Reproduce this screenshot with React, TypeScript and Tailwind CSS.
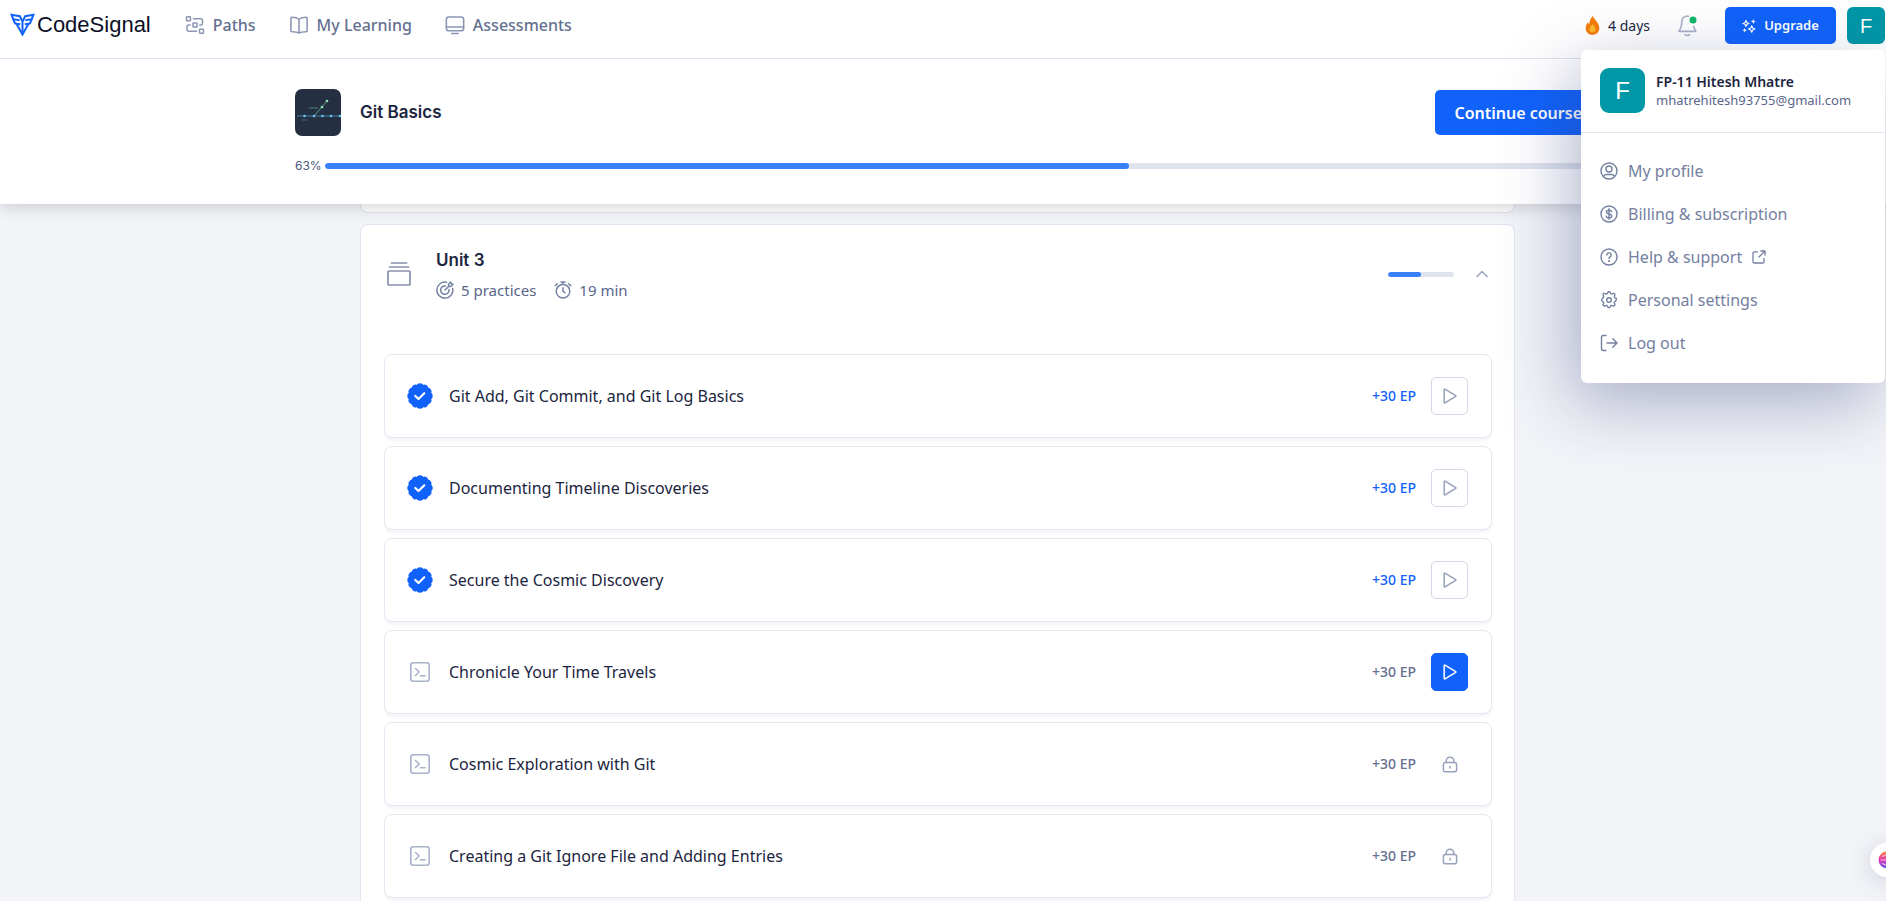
import type { ReactNode } from "react";

type IconProps = { className?: string; children?: ReactNode };

function Icon({ className = "", viewBox = "0 0 18 18", width = "1.4", children }: IconProps & { viewBox?: string; width?: string }) {
  return (
    <svg
      viewBox={viewBox}
      fill="none"
      stroke="currentColor"
      strokeWidth={width}
      strokeLinecap="round"
      strokeLinejoin="round"
      aria-hidden="true"
      className={`shrink-0 ${className}`}
    >
      {children}
    </svg>
  );
}

const LogoMark = () => (
  <svg viewBox="0 0 25 24" className="h-[24px] w-[25px] shrink-0" aria-hidden="true">
    <g fill="none" stroke="#1062fb" strokeWidth="2" strokeLinejoin="miter">
      <path d="M12.500 8.500 9.800 3.200 1.600 1.800 3.200 6.200 9.600 7.200" />
      <path d="M3.200 6.200 5 10.400 10.200 11.200M6.300 10.600 12.500 21.500 18.700 10.600" />
      <path d="M12.500 8.500 15.200 3.200 23.400 1.800 21.800 6.200 15.400 7.200" />
      <path d="M21.800 6.200 20 10.400 14.800 11.200M12.500 8.500V20" />
    </g>
  </svg>
);

const PathsIcon = () => (
  <Icon className="size-[20px] text-[#8b96b3]" viewBox="0 0 20 20" width="1.5">
    <rect x="1.500" y="1.800" width="4" height="4" rx=".6" />
    <rect x="8" y="8" width="4" height="4" rx=".6" />
    <rect x="14.500" y="14.200" width="4" height="4" rx=".6" />
    <path d="M8.500 3.800h7.500a1.500 1.500 0 0 1 1.500 1.500v3.200a1.500 1.500 0 0 1-1.500 1.500h-1.200M5.200 10H3.500A1.500 1.500 0 0 0 2 11.500v3.200a1.500 1.500 0 0 0 1.500 1.500H11.500" />
  </Icon>
);

const BookIcon = () => (
  <Icon className="size-[20px] text-[#8b96b3]" width="1.4">
    <path d="M9 3.800C7.600 2.600 5.500 2 2.500 2a.8.800 0 0 0-.8.800v11.400a.8.800 0 0 0 .8.800c3 0 5.100.2 6.500 1.400 1.400-1.200 3.500-1.400 6.500-1.400a.8.800 0 0 0 .8-.8V2.800a.8.800 0 0 0-.8-.8C12.500 2 10.400 2.600 9 3.800ZM9 3.800v12.600" />
  </Icon>
);

const MonitorIcon = () => (
  <Icon className="size-[20px] text-[#8b96b3]" width="1.4">
    <rect x="1.200" y="1.800" width="15.600" height="12.400" rx="2.300" />
    <path d="M1.200 10.800h15.600M6 16.700h6" />
  </Icon>
);

const FlameIcon = () => (
  <svg viewBox="0 0 15 19" className="h-[19px] w-[15px] shrink-0" aria-hidden="true">
    <path fill="#f57c0a" d="M7.900 0C8.400 3 14.300 6.300 14.300 12c0 4-3 6.800-6.800 6.800S.7 16 .7 12.400c0-2.600 1-4.600 2.300-6.200.2 1 .6 1.700 1.300 2.100C4.300 5 5.500 2 7.900 0Z" />
    <path fill="#fdb92e" d="M7.500 8c1.100 1.800 3.100 3 3.100 5.200a3.100 3.100 0 0 1-6.200 0C4.400 11 6.600 9.800 7.500 8Z" />
  </svg>
);

const BellIcon = () => (
  <svg viewBox="0 0 19 22" className="h-[22px] w-[19px] shrink-0" aria-hidden="true">
    <g fill="none" stroke="#a9b2c8" strokeWidth="1.6" strokeLinecap="round" strokeLinejoin="round">
      <path d="M10.500 1.200C6.400.6 3.700 3.300 3.700 6.800c0 4.200-.6 6.500-2.500 8.700-.3.400-.1.900.4.900h15.600c.5 0 .7-.5.400-.9-1-1.200-1.600-2.400-1.900-4" />
      <path d="M7 19.600c1.200 1.100 3.400 1.100 4.600 0" />
    </g>
    <circle cx="15" cy="5" r="3.500" fill="#12b76a" />
  </svg>
);

const SparkIcon = () => (
  <svg viewBox="0 0 14 14" className="size-[14px] shrink-0" aria-hidden="true">
    <path d="M4 1.500 5 3.700 7 4.500 5 5.300 4 7.500 3 5.300 1 4.500 3 3.700ZM9.700 6.800l1 2.200 2.200 1-2.200 1-1 2.200-1-2.200-2.200-1 2.200-1Z" fill="none" stroke="#fff" strokeWidth="1.200" strokeLinejoin="round" />
    <path d="M11.300 0l.7 1.800 1.700.7-1.700.7-.7 1.800-.7-1.800-1.700-.7 1.700-.7ZM2.700 9l.6 1.600 1.600.7-1.600.7-.6 1.600-.7-1.600-1.600-.7 1.600-.7Z" fill="#fff" />
  </svg>
);

const ProfileIcon = () => (
  <Icon className="size-[18px]">
    <circle cx="9" cy="9" r="8" />
    <circle cx="9" cy="7" r="3" />
    <path d="M3.500 14.200c.8-1.200 1.700-1.700 3-1.700h5c1.300 0 2.200.5 3 1.700" />
  </Icon>
);

const DollarIcon = () => (
  <Icon className="size-[18px]">
    <circle cx="9" cy="9" r="8" />
    <path d="M11.600 6.600C11.300 5.600 10.300 5.200 9 5.200c-1.500 0-2.600.6-2.600 1.900C6.400 9.800 11.700 8.200 11.700 11c0 1.300-1.200 1.900-2.700 1.900s-2.500-.6-2.800-1.700M9 3.800v10.400" />
  </Icon>
);

const HelpIcon = () => (
  <Icon className="size-[18px]">
    <circle cx="9" cy="9" r="8" />
    <path d="M6.800 7a2.200 2.200 0 1 1 3.400 1.900c-.8.500-1.200.8-1.200 1.600" />
    <circle cx="9" cy="13" r=".4" fill="currentColor" />
  </Icon>
);

const GearIcon = () => (
  <Icon className="size-[18px]">
    <path d="M7.700 1.800a1.350 1.350 0 0 1 2.600 0c.2 1.100 1.400 1.600 2.400.9a1.350 1.350 0 0 1 1.900 1.900c-.7 1-.2 2.200.9 2.400a1.350 1.350 0 0 1 0 2.600v.8c-1.100.2-1.600 1.400-.9 2.400a1.350 1.350 0 0 1-1.900 1.900c-1-.7-2.200-.2-2.400.9a1.350 1.350 0 0 1-2.600 0c-.2-1.100-1.400-1.600-2.400-.9a1.350 1.350 0 0 1-1.900-1.900c.7-1 .2-2.200-.9-2.400a1.350 1.350 0 0 1 0-2.600V7c1.100-.2 1.600-1.400.9-2.400a1.350 1.350 0 0 1 1.900-1.900c1 .7 2.200.2 2.400-.9Z" />
    <circle cx="9" cy="9" r="2.300" />
  </Icon>
);

const LogoutIcon = () => (
  <Icon className="size-[18px]">
    <path d="M6 1.500H3A1.500 1.500 0 0 0 1.500 3v12A1.500 1.500 0 0 0 3 16.500h3M7 9h10M12.800 4.800 17 9l-4.200 4.200" />
  </Icon>
);

const ExternalIcon = () => (
  <Icon className="size-[14px]" viewBox="0 0 14 14" width="1.3">
    <path d="M5.500 1.800H2.300a1.300 1.300 0 0 0-1.300 1.300v8.600A1.300 1.300 0 0 0 2.300 13h8.400a1.300 1.300 0 0 0 1.300-1.300V8.500M8.800 1H13v4.200M13 1 7 7" />
  </Icon>
);

const StackIcon = () => (
  <Icon className="size-[26px] text-[#8790ad]" viewBox="0 0 26 26" width="1.7">
    <path d="M5.500 2h15M3.500 6h19" />
    <rect x="2" y="10" width="22" height="14" rx=".8" />
  </Icon>
);

const TargetIcon = () => (
  <Icon className="size-[18px] text-[#7582a2]" width="1.5">
    <path d="M10.500 1.300A8 8 0 1 0 16.700 7.500M9.500 5A4.200 4.200 0 1 0 13 8.500M9 9l4-4M12.600 5.400V3.200L14.700 1l.6 1.700 1.700.6-2.200 2.100Z" />
  </Icon>
);

const StopwatchIcon = () => (
  <Icon className="size-[18px] text-[#7582a2]" width="1.5">
    <circle cx="9" cy="10.200" r="6.800" />
    <path d="M9 6.800v3.600l2 1.200M7 1h4M9 1v2.300M1.300 4.600l2-1.800M16.700 4.600l-2-1.800" />
  </Icon>
);

const ChevronUp = () => (
  <Icon className="h-[8px] w-[12px] text-[#9aa4bd]" viewBox="0 0 12 8" width="1.6">
    <path d="m1 6.500 5-5 5 5" />
  </Icon>
);

const DoneIcon = () => (
  <svg viewBox="0 0 26 26" className="size-[26px] shrink-0" role="img" aria-label="Completed">
    <g fill="#1062fb">
      <circle cx="13" cy="13" r="11.500" />
      {Array.from({ length: 12 }, (_, i) => (
        <circle key={i} cx="13" cy="3.600" r="3.300" transform={`rotate(${i * 30} 13 13)`} />
      ))}
    </g>
    <path d="m8.300 13 3.200 3 5.800-5.700" fill="none" stroke="#fff" strokeWidth="2.200" strokeLinecap="round" strokeLinejoin="round" />
  </svg>
);

const TerminalIcon = () => (
  <Icon className="size-[26px] text-[#a9b2c8]" viewBox="0 0 26 26" width="1.6">
    <rect x="3.800" y="3.800" width="18.400" height="18.400" rx="2.500" />
    <path d="m8.500 9.500 3.700 3.500-3.700 3.500M13.500 16.700h4.500" />
  </Icon>
);

const PlayIcon = () => (
  <Icon className="h-[16px] w-[14px]" viewBox="0 0 14 16" width="1.5">
    <path d="M1.200 1.500v13a.5.5 0 0 0 .8.400L12.700 8.400a.5.5 0 0 0 0-.8L2 1.100a.5.5 0 0 0-.8.400Z" />
  </Icon>
);

const LockIcon = () => (
  <Icon className="h-[17px] w-[16px] text-[#98a1ba]" viewBox="0 0 16 17" width="1.500">
    <rect x="1.400" y="6.600" width="13.200" height="9.200" rx="2" />
    <path d="M4.200 6.500V5a3.800 3.800 0 0 1 7.600 0v1.500M8 10.400v1.700" />
  </Icon>
);

const CourseThumb = () => (
  <svg viewBox="0 0 46 47" className="h-[47px] w-[46px] shrink-0" role="img" aria-label="Git Basics">
    <rect width="46" height="47" rx="7" fill="#242f42" />
    <path d="M2 27h44" stroke="#47809f" strokeWidth="1" />
    <path d="M19 27 32 12" stroke="#5f9c8d" strokeWidth="1" />
    <g fill="#6cc5f0">
      <circle cx="9.500" cy="27" r="1.300" />
      <circle cx="19" cy="27" r="1.300" />
      <circle cx="27.500" cy="27" r="1.300" />
      <circle cx="36" cy="27" r="1.300" />
      <circle cx="45" cy="27" r="1.300" />
    </g>
    <circle cx="27" cy="18" r="1.300" fill="#8fe3b4" />
    <circle cx="32" cy="12" r="1.300" fill="#8fe3b4" />
    <path d="M14 19h9" stroke="#477a6b" strokeWidth="1.200" />
    <path d="M6.500 31h6" stroke="#36607a" strokeWidth="1.200" />
  </svg>
);

const AssistantIcon = () => (
  <svg viewBox="0 0 18 18" className="size-[18px] shrink-0" aria-hidden="true">
    <defs>
      <linearGradient id="assistant" x1="0" y1="0" x2="0" y2="1">
        <stop offset="0" stopColor="#f9853c" />
        <stop offset=".5" stopColor="#e238b4" />
        <stop offset="1" stopColor="#5560f2" />
      </linearGradient>
    </defs>
    <circle cx="9" cy="9" r="8.500" fill="url(#assistant)" />
    <path d="M4 5.500 8 4M2.500 9H8M4 12.500 8 14" stroke="#f7b9dc" strokeWidth="1.200" fill="none" />
  </svg>
);

const nav = [
  { label: "Paths", icon: <PathsIcon /> },
  { label: "My Learning", icon: <BookIcon /> },
  { label: "Assessments", icon: <MonitorIcon /> },
];

const menu = [
  { label: "My profile", icon: <ProfileIcon /> },
  { label: "Billing & subscription", icon: <DollarIcon /> },
  { label: "Help & support", icon: <HelpIcon />, external: true },
  { label: "Personal settings", icon: <GearIcon /> },
  { label: "Log out", icon: <LogoutIcon /> },
];

type State = "done" | "next" | "locked";

const practices: { title: string; state: State }[] = [
  { title: "Git Add, Git Commit, and Git Log Basics", state: "done" },
  { title: "Documenting Timeline Discoveries", state: "done" },
  { title: "Secure the Cosmic Discovery", state: "done" },
  { title: "Chronicle Your Time Travels", state: "next" },
  { title: "Cosmic Exploration with Git", state: "locked" },
  { title: "Creating a Git Ignore File and Adding Entries", state: "locked" },
];

function UserMenu() {
  return (
    <div className="absolute top-[50px] right-px z-30 w-[304px] rounded-md bg-white shadow-[-10px_20px_68px_rgba(50,60,120,0.38)]">
      <div className="flex items-center gap-[11px] border-b border-[#e4e6f1] px-[19px] pt-[18px] pb-[19px]">
        <span className="flex size-[45px] shrink-0 items-center justify-center rounded-[9px] bg-[#0097a7] font-['Liberation_Sans',sans-serif] text-2xl text-white">F</span>
        <div className="min-w-0 whitespace-nowrap">
          <p className="text-sm leading-[18px] font-semibold text-[#1c2540]">FP-11 Hitesh Mhatre</p>
          <p className="text-[13px] leading-[18px] text-[#59668a]">mhatrehitesh93755@gmail.com</p>
        </div>
      </div>
      <ul className="pt-4 pb-[19px]">
        {menu.map((item) => (
          <li key={item.label}>
            <a href="#" className="flex h-[43px] items-center gap-2.5 px-[19px] text-base text-[#7480a0]">
              {item.icon}
              {item.label}
              {item.external && <ExternalIcon />}
            </a>
          </li>
        ))}
      </ul>
    </div>
  );
}

function TopBar() {
  return (
    <header className="relative z-30 border-b border-[#dfe1f0] bg-white pb-[7px]">
      <div className="flex h-[51px] items-center justify-between pr-px pl-[10px]">
        <div className="flex items-center gap-[34px] pb-0.5">
          <a href="#" className="flex items-center gap-0.5 font-['Liberation_Sans',sans-serif] text-[22px] text-[#0b1026]">
            <LogoMark />
            CodeSignal
          </a>
          <nav className="flex items-center gap-[33px]">
            {nav.map((item) => (
              <a key={item.label} href="#" className="flex items-center gap-2 text-base font-medium text-[#64708f]">
                {item.icon}
                {item.label}
              </a>
            ))}
          </nav>
        </div>
        <div className="flex items-center">
          <div className="mr-7 flex items-center gap-2 text-sm text-[#1c2540]">
            <FlameIcon />
            4 days
          </div>
          <button type="button" aria-label="Notifications" className="mr-7">
            <BellIcon />
          </button>
          <button type="button" className="mr-[11px] flex h-[37px] w-[111px] items-center justify-center gap-2 rounded-[5px] bg-[#1062fb] text-[13px] font-semibold text-white">
            <SparkIcon />
            Upgrade
          </button>
          <button type="button" aria-label="Account menu" className="flex h-[37px] w-[38px] items-center justify-center rounded-md bg-[#0097a7] font-['Liberation_Sans',sans-serif] text-xl text-white">
            F
          </button>
        </div>
      </div>
      <UserMenu />
    </header>
  );
}

function CourseHeader() {
  return (
    <section className="relative z-20 bg-white pt-[30px] pr-4 pb-[29px] pl-[26px] shadow-[0_2px_16px_rgba(20,20,30,0.2)]">
      <div className="mx-auto max-w-[1306px]">
        <div className="flex items-center justify-between">
          <div className="flex items-center gap-[19px]">
            <CourseThumb />
            <h1 className="font-['Inter',sans-serif] text-[17px] font-semibold text-[#1c2540]">Git Basics</h1>
          </div>
          <button type="button" className="h-[45px] rounded-[5px] bg-[#1062fb] px-[19px] text-base font-semibold text-white">Continue course</button>
        </div>
        <div className="mt-[21px] flex h-[18px] items-center gap-[5px]">
          <span className="w-[25px] font-['Inter',sans-serif] text-xs text-[#4a5778]">63%</span>
          <div role="progressbar" aria-label="Course progress" aria-valuenow={63} className="h-[6px] flex-1 overflow-hidden rounded-full bg-[#dfe3ee]">
            <div className="h-full rounded-full bg-[#3880ff]" style={{ width: "63%" }} />
          </div>
        </div>
      </div>
    </section>
  );
}

function PracticeRow({ title, state }: { title: string; state: State }) {
  return (
    <li className="flex h-[84px] items-center justify-between rounded-lg border border-[#e4e6f1] bg-white pr-[23px] pl-[22px] shadow-[0_3px_2px_rgba(60,70,120,0.05)]">
      <div className="flex items-center gap-4">
        {state === "done" ? <DoneIcon /> : <TerminalIcon />}
        <span className="text-base text-[#1c2540]">{title}</span>
      </div>
      <div className="flex items-center gap-[15px]">
        <span className={`text-sm font-medium ${state === "done" ? "text-[#1062fb]" : "text-[#64708f]"}`}>+30 EP</span>
        {state === "locked" ? (
          <span role="img" aria-label="Locked" className="flex h-[38px] w-[37px] items-center justify-center">
            <LockIcon />
          </span>
        ) : (
          <button
            type="button"
            aria-label={`Start ${title}`}
            className={`flex h-[38px] w-[37px] items-center justify-center rounded-[5px] border ${state === "next" ? "border-[#1062fb] bg-[#1062fb] text-white" : "border-[#d3d7e6] bg-white text-[#98a1ba]"}`}
          >
            <PlayIcon />
          </button>
        )}
      </div>
    </li>
  );
}

function Unit() {
  return (
    <section className="rounded-lg border border-[#e1e4f0] bg-white pr-[22px] pb-6 pl-[23px]">
      <div className="flex items-center justify-between pt-[21px] pb-5">
        <div className="flex items-center gap-6 pl-0.5">
          <StackIcon />
          <div>
            <h2 className="font-['Inter',sans-serif] text-[17px] leading-7 font-semibold text-[#1c2540]">Unit 3</h2>
            <div className="mt-1 flex h-6 items-center gap-[18px] text-[15px] text-[#59658a]">
              <span className="flex items-center gap-[7px]">
                <TargetIcon />5 practices
              </span>
              <span className="flex items-center gap-[7px]">
                <StopwatchIcon />
                19 min
              </span>
            </div>
          </div>
        </div>
        <div className="flex items-center gap-[22px] pr-1">
          <div role="progressbar" aria-label="Unit progress" aria-valuenow={50} className="h-[5px] w-[66px] overflow-hidden rounded-full bg-[#dfe3ee]">
            <div className="h-full rounded-full bg-[#3880ff]" style={{ width: "50%" }} />
          </div>
          <button type="button" aria-label="Collapse unit">
            <ChevronUp />
          </button>
        </div>
      </div>
      <ul className="mt-8 flex flex-col gap-2">
        {practices.map((p) => (
          <PracticeRow key={p.title} {...p} />
        ))}
      </ul>
    </section>
  );
}

export default function App() {
  return (
    <div className="flex h-screen flex-col overflow-hidden bg-[#f3f4f8] font-['Noto_Sans',sans-serif]">
      <TopBar />
      <CourseHeader />
      <main className="min-h-0 flex-1 overflow-hidden pr-[11px]">
        <div className="mx-auto flex max-w-[1155px] flex-col gap-[11px]">
          <div className="h-[9px] rounded-b-lg border border-t-0 border-[#e1e4f0] bg-white" />
          <Unit />
        </div>
      </main>
      <button type="button" aria-label="Open assistant" className="fixed -right-[18px] bottom-6 z-20 flex size-[34px] items-center justify-center rounded-full bg-white shadow-[0_4px_24px_rgba(60,70,110,0.2)]">
        <AssistantIcon />
      </button>
    </div>
  );
}
